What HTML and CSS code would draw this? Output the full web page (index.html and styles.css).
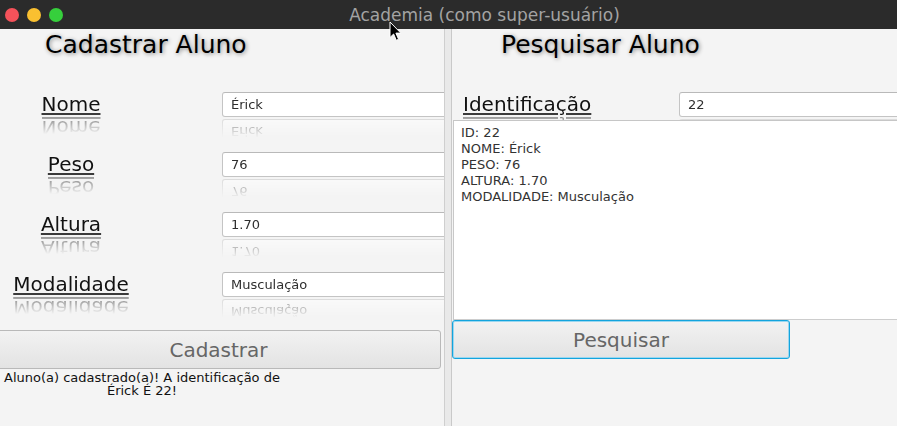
FILE: index.html
```html
<!DOCTYPE html>
<html lang="pt">
<head>
<meta charset="utf-8">
<title>Academia</title>
<link rel="stylesheet" href="styles.css">
</head>
<body>
<div class="window">
  <header class="titlebar">
    <div class="lights">
      <span class="light light-red"></span>
      <span class="light light-yellow"></span>
      <span class="light light-green"></span>
    </div>
    <div class="wintitle">Academia (como super-usuário)</div>
  </header>
  <main class="split">
    <section class="pane pane-left">
      <h1 class="heading">Cadastrar Aluno</h1>
      <div class="form">
        <div class="row">
          <div class="label-cell"><span class="label">Nome</span></div>
          <div class="field">Érick</div>
        </div>
        <div class="row">
          <div class="label-cell"><span class="label">Peso</span></div>
          <div class="field">76</div>
        </div>
        <div class="row">
          <div class="label-cell"><span class="label">Altura</span></div>
          <div class="field">1.70</div>
        </div>
        <div class="row">
          <div class="label-cell"><span class="label">Modalidade</span></div>
          <div class="field">Musculação</div>
        </div>
      </div>
      <button class="btn btn-cadastrar" type="button">Cadastrar</button>
      <p class="msg">Aluno(a) cadastrado(a)! A identificação de Érick É 22!</p>
    </section>
    <div class="divider"></div>
    <section class="pane pane-right">
      <h1 class="heading heading-right">Pesquisar Aluno</h1>
      <div class="row row-right">
        <div class="label-cell label-cell-right"><span class="label">Identificação</span></div>
        <div class="field field-right">22</div>
      </div>
      <div class="result">ID: 22
NOME: Érick
PESO: 76
ALTURA: 1.70
MODALIDADE: Musculação</div>
      <button class="btn btn-pesquisar" type="button">Pesquisar</button>
    </section>
  </main>
  <svg class="cursor" width="13" height="21" viewBox="0 0 13 21">
    <path d="M1 1 L1 16.5 L4.6 13 L7.3 19.3 L9.6 18.3 L6.9 12.1 L11.8 12.1 Z" fill="#000" stroke="#fff" stroke-width="1" stroke-linejoin="round"/>
  </svg>
</div>
</body>
</html>
```
FILE: styles.css
```css
html, body {
  margin: 0;
  padding: 0;
  width: 897px;
  height: 426px;
  overflow: hidden;
  background: #f4f4f4;
}

.window {
  position: relative;
  width: 897px;
  height: 426px;
  font-family: "DejaVu Sans", "Liberation Sans", sans-serif;
  display: flex;
  flex-direction: column;
}

.titlebar {
  height: 29px;
  flex: 0 0 29px;
  background: #2b2b2b;
  display: flex;
  align-items: center;
}

.lights {
  display: flex;
  gap: 8px;
  padding-left: 5px;
}

.light {
  width: 14px;
  height: 14px;
  border-radius: 50%;
  display: block;
}
.light-red { background: #f5525a; }
.light-yellow { background: #fac030; }
.light-green { background: #36cf3c; }

.wintitle {
  flex: 1;
  text-align: center;
  padding-left: 9px;
  color: #a3a3a3;
  font-size: 17px;
  line-height: 20px;
  white-space: nowrap;
}

.split {
  flex: 1;
  display: flex;
  overflow: hidden;
}

.pane {
  background: #f4f4f4;
  overflow: hidden;
  position: relative;
}

.pane-left { width: 444px; flex: 0 0 444px; }
.pane-right { flex: 1; }

.divider {
  flex: 0 0 8px;
  box-sizing: border-box;
  border-left: 1px solid #cfcfcf;
  border-right: 1px solid #c9c9c9;
  background: #e9e9e9;
}

.heading {
  margin: 1px 0 0 45px;
  font-size: 25px;
  font-weight: normal;
  line-height: 29px;
  color: #000;
  text-shadow: 1px 1px 4px rgba(0, 0, 0, 0.45);
  white-space: nowrap;
}
.heading-right { margin-left: 49px; }

.form {
  margin-top: 33px;
  display: flex;
  flex-direction: column;
  gap: 35px;
}

.row {
  display: flex;
  align-items: flex-start;
  height: 25px;
}

.label-cell {
  width: 142px;
  flex: 0 0 142px;
  text-align: center;
}

.label {
  display: inline-block;
  font-size: 20px;
  color: #111;
  text-decoration: underline;
  text-decoration-thickness: 2px;
  text-underline-offset: 2px;
  text-decoration-color: #3a3a3a;
  -webkit-box-reflect: below 0 linear-gradient(to bottom, transparent 25%, rgba(0, 0, 0, 0.5));
}

.field {
  margin-left: 80px;
  width: 300px;
  flex: 0 0 300px;
  height: 25px;
  box-sizing: border-box;
  border: 1px solid #c4c4c4;
  border-top-color: #b9b9b9;
  border-radius: 3px;
  background: #fff;
  padding: 4px 8px;
  font-size: 13px;
  line-height: 15px;
  color: #2e2e2e;
  white-space: nowrap;
  -webkit-box-reflect: below 2px linear-gradient(to bottom, transparent 25%, rgba(0, 0, 0, 0.5));
}

.btn {
  display: block;
  box-sizing: border-box;
  height: 39px;
  font-family: "DejaVu Sans", "Liberation Sans", sans-serif;
  font-size: 20px;
  color: #666;
  background: linear-gradient(to bottom, #f2f2f2, #e3e3e3);
  border: 1px solid #b9b9b9;
  border-radius: 3px;
  padding: 0;
}

.btn-cadastrar {
  margin: 33px 0 0 -4px;
  width: 445px;
}

.msg {
  margin: 2px 0 0;
  width: 284px;
  text-align: center;
  font-size: 13px;
  line-height: 13px;
  color: #111;
}

.row-right { margin-top: 33px; }

.label-cell-right {
  width: 216px;
  flex: 0 0 216px;
  margin-left: 11px;
  text-align: left;
}

.field-right { margin-left: 0; }

.result {
  position: relative;
  z-index: 1;
  margin: 3px 0 0 1px;
  width: 520px;
  height: 200px;
  box-sizing: border-box;
  background: #fff;
  border-top: 1px solid #c6c6c6;
  border-left: 1px solid #c8c8c8;
  border-bottom: 1px solid #cdcdcd;
  padding: 4px 7px;
  font-size: 13px;
  line-height: 16px;
  color: #333;
  white-space: pre-line;
}

.btn-pesquisar {
  position: relative;
  z-index: 2;
  margin: 0;
  width: 338px;
  border: 1px solid #13a4dd;
  box-shadow: inset 0 0 0 1px #9ad7f0;
}

.cursor {
  position: absolute;
  left: 389px;
  top: 21px;
}
```
